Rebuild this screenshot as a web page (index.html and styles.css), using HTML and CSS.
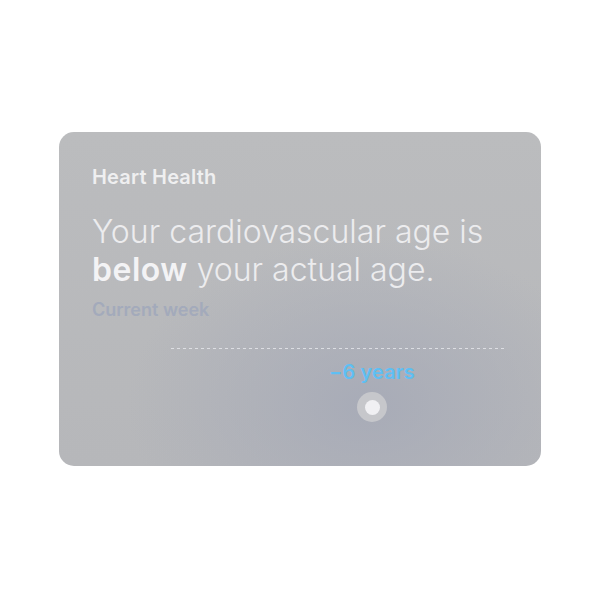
FILE: index.html
```html
<!DOCTYPE html>
<html>
<head>
<meta charset="utf-8">
<link rel="stylesheet" href="styles.css">
</head>
<body>
<div class="page">
  <section class="card">
    <h2 class="title">Heart Health</h2>
    <p class="headline">Your cardiovascular age is <strong>below</strong> your actual age.</p>
    <div class="period">Current week</div>
    <div class="chart">
      <div class="dotline"></div>
      <div class="marker">
        <span class="value">−6 years</span>
        <span class="dot"></span>
      </div>
    </div>
  </section>
</div>
</body>
</html>
```
FILE: styles.css
```css
* { box-sizing: border-box; }
html, body { margin: 0; padding: 0; background: #fff; }
body { font-family: Inter, "Liberation Sans", sans-serif; }
.page {
  width: 600px;
  height: 600px;
  display: flex;
  align-items: center;
  justify-content: center;
}
.card {
  width: 482px;
  height: 334px;
  margin-top: -2px;
  border-radius: 15px;
  padding: 34px 33px 0 33px;
  background:
    radial-gradient(ellipse 240px 170px at 64% 82%, rgba(166,170,183,0.9), rgba(166,170,183,0) 100%),
    linear-gradient(180deg, #bbbcbe 0%, #b6b7ba 100%);
  display: flex;
  flex-direction: column;
}
.title {
  margin: 0;
  font-size: 20px;
  line-height: 22px;
  font-weight: 600;
  letter-spacing: 0.2px;
  color: #efeff0;
}
.headline {
  margin: 25px 0 0 0;
  font-size: 32px;
  line-height: 38px;
  font-weight: 300;
  color: #ececee;
  width: 410px;
}
.headline strong { font-weight: 600; color: #f3f3f5; letter-spacing: 0.5px; }
.period {
  margin-top: 11px;
  font-size: 18px;
  line-height: 20px;
  font-weight: 600;
  color: #a3aabb;
}
.chart {
  margin-top: 28px;
  display: flex;
  flex-direction: column;
}
.dotline {
  margin-left: 79px;
  margin-right: 2px;
  height: 1px;
  background: repeating-linear-gradient(90deg, rgba(235,236,240,0.75) 0 3px, transparent 3px 6px);
}
.marker {
  margin-left: 232px;
  width: 96px;
  display: flex;
  flex-direction: column;
  align-items: center;
  margin-top: 12px;
}
.value {
  font-size: 20px;
  line-height: 22px;
  font-weight: 600;
  letter-spacing: 0.1px;
  color: #5ebff3;
}
.dot {
  margin-top: 9px;
  width: 30px;
  height: 30px;
  border-radius: 50%;
  background: #c6c7cb;
  display: flex;
  align-items: center;
  justify-content: center;
}
.dot::after {
  content: "";
  width: 15px;
  height: 15px;
  border-radius: 50%;
  background: #f0f0f3;
}
```
